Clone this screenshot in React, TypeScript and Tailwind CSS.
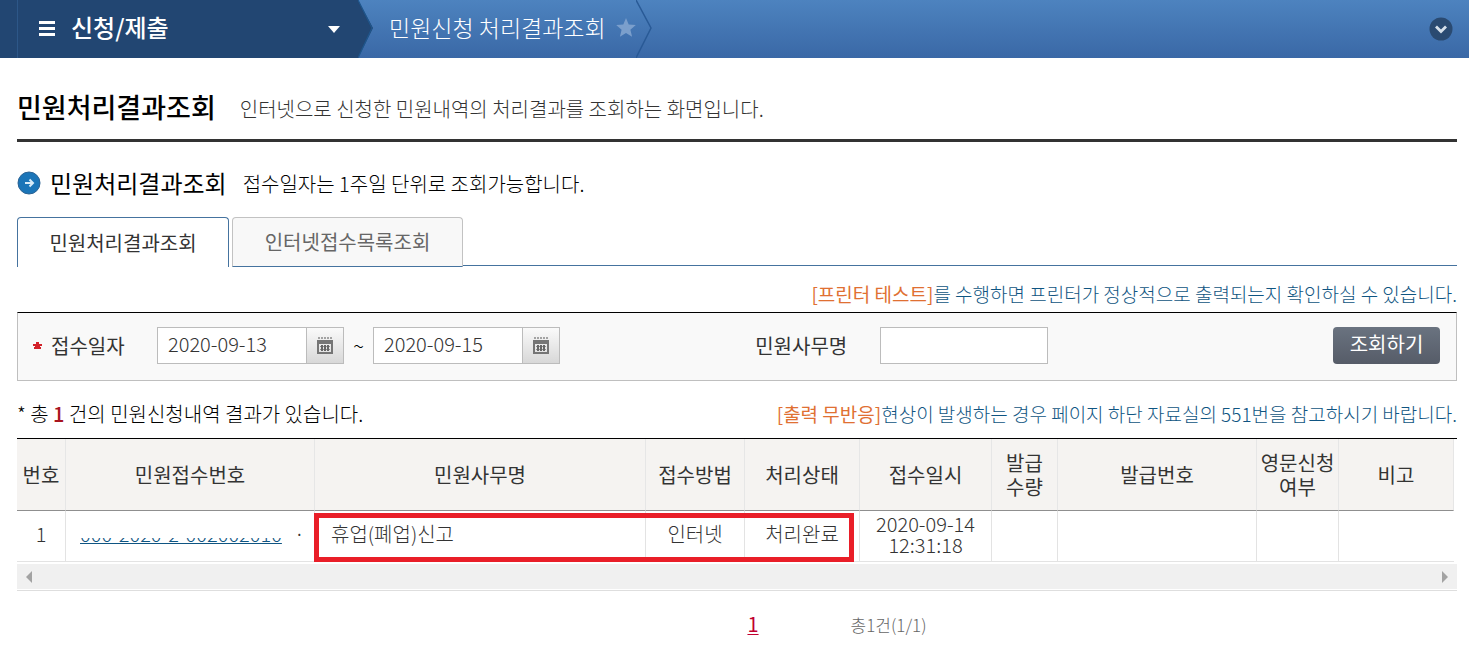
import { useState } from "react";

const columns = [
  { title: "번호", width: "w-[49px]" },
  { title: "민원접수번호", width: "w-[249px]" },
  { title: "민원사무명", width: "w-auto" },
  { title: "접수방법", width: "w-[99px]" },
  { title: "처리상태", width: "w-[115px]" },
  { title: "접수일시", width: "w-[132px]" },
  { title: "발급 수량", width: "w-[66px]" },
  { title: "발급번호", width: "w-[199px]" },
  { title: "영문신청 여부", width: "w-[82px]" },
  { title: "비고", width: "w-[115px]" },
];

const cell = "h-[51px] border-r border-b border-[#e3e3e3] px-0 pt-0 pb-1";

function CalendarIcon() {
  return (
    <svg width="18" height="18" viewBox="0 0 18 18" aria-hidden="true">
      <path d="M2 0h2v2H2zM5 0h2v2H5zM8 0h2v2H8zM11 0h2v2h-2zM14 0h2v2h-2z" fill="#a3a3a3" />
      <path fillRule="evenodd" d="M1 3h16v14H1zM3 7v8h12V7z" fill="#757575" />
      <path d="M4 9h10v1H4zM4 12h10v1H4z" fill="#8d8d8d" />
      <path d="M5 8h2v6H5zM8 8h2v6H8zM11 8h2v6h-2z" fill="#666" />
    </svg>
  );
}

function DateField({ id, label, initial }: { id: string; label: string; initial: string }) {
  const [value, setValue] = useState(initial);
  return (
    <div className="flex">
      <input
        id={id}
        aria-label={label}
        value={value}
        onChange={(e) => setValue(e.target.value)}
        className="h-[37px] w-[150px] border border-[#bcbcbc] bg-white px-[10px] pb-1 text-xl font-light text-[#333]"
      />
      <button
        type="button"
        aria-label={label + " 달력"}
        className="-ml-px flex h-[37px] w-[38px] items-center justify-center border border-[#bcbcbc] bg-gradient-to-b from-[#fafafa] to-[#d8d8d8]"
      >
        <CalendarIcon />
      </button>
    </div>
  );
}

function TopBar() {
  return (
    <header className="flex h-[58px] items-stretch bg-gradient-to-b from-[#4d83bf] to-[#3a68a6] text-white">
      <div className="w-[18px] border-r border-[#2d5788] bg-[#224672]" />
      <button type="button" className="flex w-[340px] items-center bg-[#224672] pl-[21px] text-left">
        <svg width="16" height="16" viewBox="0 0 16 16" fill="#fff" aria-hidden="true">
          <path d="M0 0h16v3H0zM0 6h16v3H0zM0 12h16v3H0z" />
        </svg>
        <span className="ml-4 flex-1 pb-1 text-2xl font-medium">신청/제출</span>
        <svg className="mr-[18px]" width="12" height="7" viewBox="0 0 12 7" fill="#fff" aria-hidden="true">
          <path d="M0 0h12L6 7z" />
        </svg>
      </button>
      <svg width="15" height="58" viewBox="0 0 15 58" aria-hidden="true">
        <path d="M0 0 15 28 0 58z" fill="#224672" />
        <path d="M0 0 14 28 0 58" fill="none" stroke="#1f568c" strokeWidth="1.2" />
      </svg>
      <nav className="flex items-center">
        <a href="#result" className="ml-4 pb-1 text-[23px] font-light">민원신청 처리결과조회</a>
        <button type="button" aria-label="즐겨찾기" className="ml-[10px] pb-1">
          <svg width="20" height="19" viewBox="0 0 20 19" fill="#7b9fcc" aria-hidden="true">
            <path d="M10 0l2.7 6.5 7.1.6-5.4 4.6 1.7 7L10 15l-6.1 3.7 1.7-7L.2 7.1l7.1-.6z" />
          </svg>
        </button>
        <svg width="16" height="58" viewBox="0 0 16 58" fill="none" stroke="#295a96" strokeWidth="1.5" aria-hidden="true">
          <path d="M0 0 15 28 0 58" />
        </svg>
      </nav>
      <button type="button" aria-label="펼치기" className="mr-4 ml-auto">
        <svg width="24" height="24" viewBox="0 0 24 24" aria-hidden="true">
          <circle cx="12" cy="12" r="11.5" fill="#2a4a71" />
          <path d="M7 9.500 12 14.500 17 9.500" fill="none" stroke="#d6e0ea" strokeWidth="2.800" />
        </svg>
      </button>
    </header>
  );
}

export default function App() {
  const [tab, setTab] = useState(0);
  return (
    <div className="min-h-screen bg-white font-['Noto_Sans_CJK_KR',sans-serif] text-xl font-light text-black">
      <TopBar />
      <main id="result" className="pr-3 pl-[17px]">
        <div className="flex h-[84px] items-center border-b-[3px] border-[#333] pt-4">
          <h1 className="text-[27px] leading-8 font-medium">민원처리결과조회</h1>
          <p className="ml-6 pt-1 text-[#333]">인터넷으로 신청한 민원내역의 처리결과를 조회하는 화면입니다.</p>
        </div>

        <div className="flex h-[75px] items-center pt-[7px]">
          <svg width="24" height="24" viewBox="0 0 24 24" aria-hidden="true">
            <circle cx="12" cy="12" r="11" fill="#1b75b8" stroke="#2c6394" />
            <path d="M8 12h8M12.500 8.500l3.500 3.500-3.500 3.500" fill="none" stroke="#d9ecf8" strokeWidth="2" />
          </svg>
          <h2 className="ml-[9px] text-2xl leading-8 font-normal">민원처리결과조회</h2>
          <p className="ml-4 pt-[2px]">접수일자는 1주일 단위로 조회가능합니다.</p>
        </div>

        <div role="tablist" className="flex h-[50px] items-stretch gap-[3px]">
          <button
            type="button"
            role="tab"
            aria-selected={tab === 0}
            onClick={() => setTab(0)}
            className="w-[212px] rounded-t-sm border border-b-0 border-[#45739f] bg-white font-normal text-[#333]"
          >
            민원처리결과조회
          </button>
          <button
            type="button"
            role="tab"
            aria-selected={tab === 1}
            onClick={() => setTab(1)}
            className="w-[231px] rounded-t-sm border border-[#c2c2c2] border-b-[#45739f] bg-[#f8f8f8] font-normal text-[#666]"
          >
            인터넷접수목록조회
          </button>
          <div className="-ml-[3px] mb-px flex-1 border-b border-[#45739f]" />
        </div>

        <p className="flex h-[45px] items-center justify-end pt-[9px] text-[19px] text-[#0f5582]">
          <span className="font-normal text-[#e07032]">[프린터 테스트]</span>를 수행하면 프린터가 정상적으로 출력되는지 확인하실 수 있습니다.
        </p>

        <form
          onSubmit={(e) => e.preventDefault()}
          className="flex h-[69px] items-center border border-[#bfbfbf] border-t-black bg-[#f9f9f9] pr-4 pb-[2px]"
        >
          <div className="flex w-[51%] items-center">
            <svg className="ml-[15px]" width="9" height="8" viewBox="0 0 9 8" aria-hidden="true">
              <path d="M3 0h3v2h3v2H7v1h1v2H1V5h1V4H0V2h3z" fill="#d3222a" />
            </svg>
            <label htmlFor="from" className="ml-[9px] w-[106px] font-normal text-[#333]">접수일자</label>
            <DateField id="from" label="접수일자 시작" initial="2020-09-13" />
            <span className="w-[29px] text-center">~</span>
            <DateField id="to" label="접수일자 종료" initial="2020-09-15" />
          </div>
          <label htmlFor="name" className="ml-3 w-[125px] font-normal text-[#333]">민원사무명</label>
          <input id="name" className="h-[37px] w-[168px] border border-[#bcbcbc] bg-white px-[10px]" />
          <button
            type="submit"
            className="ml-auto h-[37px] w-[107px] rounded-sm bg-gradient-to-b from-[#6a7380] to-[#565c68] pb-[3px] font-normal text-white"
          >
            조회하기
          </button>
        </form>

        <div className="flex h-[57px] items-center justify-between pt-[9px]">
          <p>
            * 총 <b className="font-medium text-[#a8141e]">1</b> 건의 민원신청내역 결과가 있습니다.
          </p>
          <p className="text-[19px] text-[#0f5582]">
            <span className="font-normal text-[#e07032]">[출력 무반응]</span>현상이 발생하는 경우 페이지 하단 자료실의 551번을 참고하시기 바랍니다.
          </p>
        </div>

        <div className="border-t border-black pr-[3px]">
          <table className="w-full table-fixed border-separate border-spacing-0 text-center text-[#333]">
            <thead>
              <tr>
                {columns.map((c) => (
                  <th
                    key={c.title}
                    scope="col"
                    className={c.width + " h-[72px] border-r border-b border-r-[#e6e6e6] border-b-[#8f8f8f] bg-[#f5f3f1] p-0 leading-6 font-normal"}
                  >
                    {c.title.split(" ").map((line) => (
                      <span key={line} className="block">{line}</span>
                    ))}
                  </th>
                ))}
              </tr>
            </thead>
            <tbody>
              <tr>
                <td className={cell}>1</td>
                <td className={cell}>
                  <div className="relative flex items-center pl-[14px]">
                    <a href="#receipt" className="text-[#0f5582] underline decoration-1 underline-offset-1">
                      000-2020-2-002002010
                    </a>
                    <span className="absolute top-0 left-3 h-[18px] w-[210px] bg-white" />
                    <span className="ml-3">·</span>
                  </div>
                </td>
                <td className={cell + " relative text-left"}>
                  <span className="pl-4">휴업(폐업)신고</span>
                  <div className="pointer-events-none absolute top-[2px] -left-px h-[49px] w-[calc(100%+210px)] border-[5px] border-[#e91e28]" />
                </td>
                <td className={cell}>인터넷</td>
                <td className={cell}>처리완료</td>
                <td className={cell + " leading-[21px]"}>
                  2020-09-14<br />12:31:18
                </td>
                <td className={cell} />
                <td className={cell} />
                <td className={cell} />
                <td className="h-[51px] border-b border-[#e3e3e3] p-0" />
              </tr>
            </tbody>
          </table>
        </div>

        <div className="mt-[2px] border-b border-[#dedede] pb-[1px]">
          <div className="flex h-[25px] items-center justify-between bg-[#f0f0f0] px-[9px]">
            <svg width="6" height="12" viewBox="0 0 6 12" fill="#a3a3a3" aria-hidden="true"><path d="M6 0v12L0 6z" /></svg>
            <svg width="6" height="12" viewBox="0 0 6 12" fill="#a3a3a3" aria-hidden="true"><path d="M0 0v12l6-6z" /></svg>
          </div>
        </div>

        <div className="flex h-[62px] items-center justify-center gap-[92px] pt-[6px] pl-[200px]">
          <a href="#page-1" className="pb-[2px] font-normal text-[#c1002f] underline decoration-1 underline-offset-2">1</a>
          <span className="text-[17px] text-[#666]">총1건(1/1)</span>
        </div>
      </main>
    </div>
  );
}
